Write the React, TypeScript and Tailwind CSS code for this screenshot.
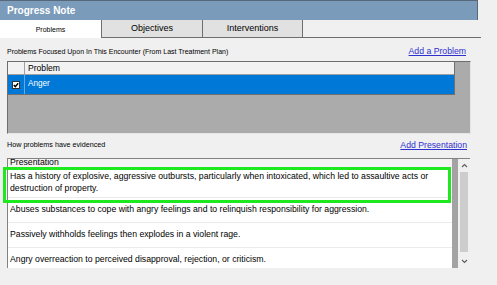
function Chevron({ up }: { up?: boolean }) {
  return (
    <svg width="7" height="5" viewBox="0 0 7 5">
      <polyline
        points={up ? "1,4 3.5,1.5 6,4" : "1,1 3.5,3.5 6,1"}
        fill="none"
        stroke="#606060"
        strokeWidth="1.2"
      />
    </svg>
  );
}

function Check() {
  return (
    <svg width="8" height="8" viewBox="0 0 8 8">
      <rect x="0.5" y="0.5" width="7" height="7" fill="#ffffff" stroke="#333333" strokeWidth="1" />
      <polyline points="1.8,4 3.3,5.6 6.2,2.2" fill="none" stroke="#000000" strokeWidth="1.4" />
    </svg>
  );
}

export default function App() {
  const rows = [
    "Abuses substances to cope with angry feelings and to relinquish responsibility for aggression.",
    "Passively withholds feelings then explodes in a violent rage.",
    "Angry overreaction to perceived disapproval, rejection, or criticism.",
  ];
  return (
    <div className="w-[497px] h-[285px] bg-[#f0f0f0] overflow-hidden font-['Liberation_Sans',Arial,sans-serif] text-black">
      {/* Title bar */}
      <div className="w-[478px] h-[20px] bg-[#7b9bbb] border-t border-r border-[#56687a] flex items-center pl-[7px]">
        <span className="text-white font-bold text-[10px] leading-none">Progress Note</span>
      </div>

      {/* Tabs */}
      <div className="flex h-[18px] w-[481px]">
        <div className="w-[101px] h-full bg-white flex items-center justify-center text-[7px] leading-none">
          Problems
        </div>
        <div className="w-[101px] h-full bg-[#e1e1e1] border-l border-b border-[#6e6e6e] flex items-center justify-center text-[9px] leading-none">
          Objectives
        </div>
        <div className="w-[101px] h-full bg-[#e1e1e1] border-l border-r border-b border-[#6e6e6e] flex items-center justify-center text-[9px] leading-none">
          Interventions
        </div>
        <div className="flex-1 h-full border-b border-[#6e6e6e]" />
      </div>

      {/* Label row 1 */}
      <div className="h-[23px] pt-[3px] pl-[7px] pr-[31px] flex items-center justify-between">
        <span className="text-[7px] leading-none">Problems Focused Upon In This Encounter (From Last Treatment Plan)</span>
        <span className="text-[8.7px] leading-none text-[#2f2fd0] underline">Add a Problem</span>
      </div>

      {/* Problems grid */}
      <div className="ml-[7px] w-[464px] h-[73px] bg-[#ababab] border-l border-t border-[#6d6d6d] border-r border-r-[#e6e6e6] border-b border-b-[#e6e6e6]">
        <div className="w-[447px] border-r border-b border-[#707070]">
          <div className="flex h-[13px] bg-[#f2f2f2] border-b border-[#a0a0a0]">
            <div className="w-[17px] h-full border-r border-[#a0a0a0]" />
            <div className="flex-1 pl-[3px] flex items-center text-[8.6px] leading-none">Problem</div>
          </div>
          <div className="flex h-[19px] bg-[#0078d7]">
            <div className="w-[17px] h-full border-r border-[#6aa8e4] flex items-center justify-center">
              <Check />
            </div>
            <div className="flex-1 pl-[3px] flex items-center text-[8.2px] leading-none text-white">Anger</div>
          </div>
        </div>
      </div>

      {/* Label row 2 */}
      <div className="h-[24px] pb-[2px] pl-[7px] pr-[30px] flex items-center justify-between">
        <span className="text-[7.2px] leading-none">How problems have evidenced</span>
        <span className="text-[8.7px] leading-none text-[#2f2fd0] underline">Add Presentation</span>
      </div>

      {/* Presentation list */}
      <div className="relative ml-[7px] w-[463px] h-[110px] border-l border-t border-[#828282] flex">
        <div className="w-[444px] h-full overflow-hidden bg-white">
          <div className="h-[9px] overflow-hidden bg-[#f4f4f4]">
            <div className="-mt-[3px] leading-[12px] pl-[2px] text-[8.7px]">Presentation</div>
          </div>
          <div className="h-[30px] flex items-center pl-[2px] pr-[8px] border-b border-[#ececec] text-[8.7px] leading-[11.5px]">
            Has a history of explosive, aggressive outbursts, particularly when intoxicated, which led to assaultive acts or destruction of property.
          </div>
          {rows.map((r) => (
            <div
              key={r}
              className="h-[25px] flex items-center pl-[2px] pr-[8px] border-b border-[#ececec] text-[8.7px] leading-[11.5px] whitespace-nowrap"
            >
              {r}
            </div>
          ))}
        </div>
        <div className="w-[6px] h-full bg-[#a3a3a3]" />
        <div className="w-[12px] h-full bg-[#f0f0f0] flex flex-col">
          <div className="h-[13px] flex items-center justify-center">
            <Chevron up />
          </div>
          <div className="h-[80px] mx-[2px] bg-[#cdcdcd]" />
          <div className="h-[3px]" />
          <div className="h-[13px] flex items-center justify-center">
            <Chevron />
          </div>
        </div>
        {/* highlight annotation */}
        <div className="absolute left-[-5px] top-[8px] w-[448px] h-[36px] border-[3px] border-[#1ee81e] pointer-events-none" />
      </div>
    </div>
  );
}
